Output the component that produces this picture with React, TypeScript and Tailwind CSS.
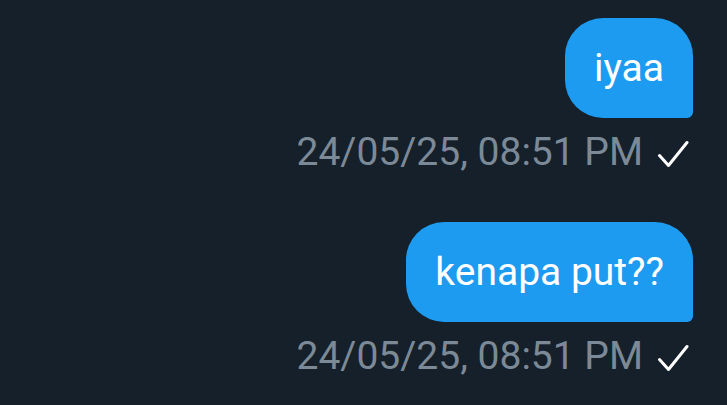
const messages = [
	{ id: 1, text: "iyaa", time: "24/05/25, 08:51 PM" },
	{ id: 2, text: "kenapa put??", time: "24/05/25, 08:51 PM" },
];

const Tick = () => (
	<svg width="32" height="32" viewBox="0 0 32 32" fill="none" className="shrink-0">
		<path d="M2.5 18.5 11.5 28.5 30 5.5" stroke="white" strokeWidth="3" strokeLinecap="round" strokeLinejoin="round" />
	</svg>
);

const App = () => {
	return (
		<div className="h-[405px] w-full overflow-hidden bg-[#15202b] pr-[34px] pt-[18px] font-['Roboto',sans-serif]">
			<div className="flex flex-col items-end gap-[50px]">
				{messages.map((m) => (
					<div key={m.id} className="flex flex-col items-end">
						<div className="flex h-[100px] items-center rounded-[38px] rounded-br-[6px] bg-[#1d9bf0] px-[29px] text-[39px] leading-none text-white">
							{m.text}
						</div>
						<div className="mt-[15px] flex h-[39px] items-center gap-[14px] pr-[4px] text-[39px] leading-none text-[#7c8a97]">
							<span>{m.time}</span>
							<Tick />
						</div>
					</div>
				))}
			</div>
		</div>
	);
};

export default App;
